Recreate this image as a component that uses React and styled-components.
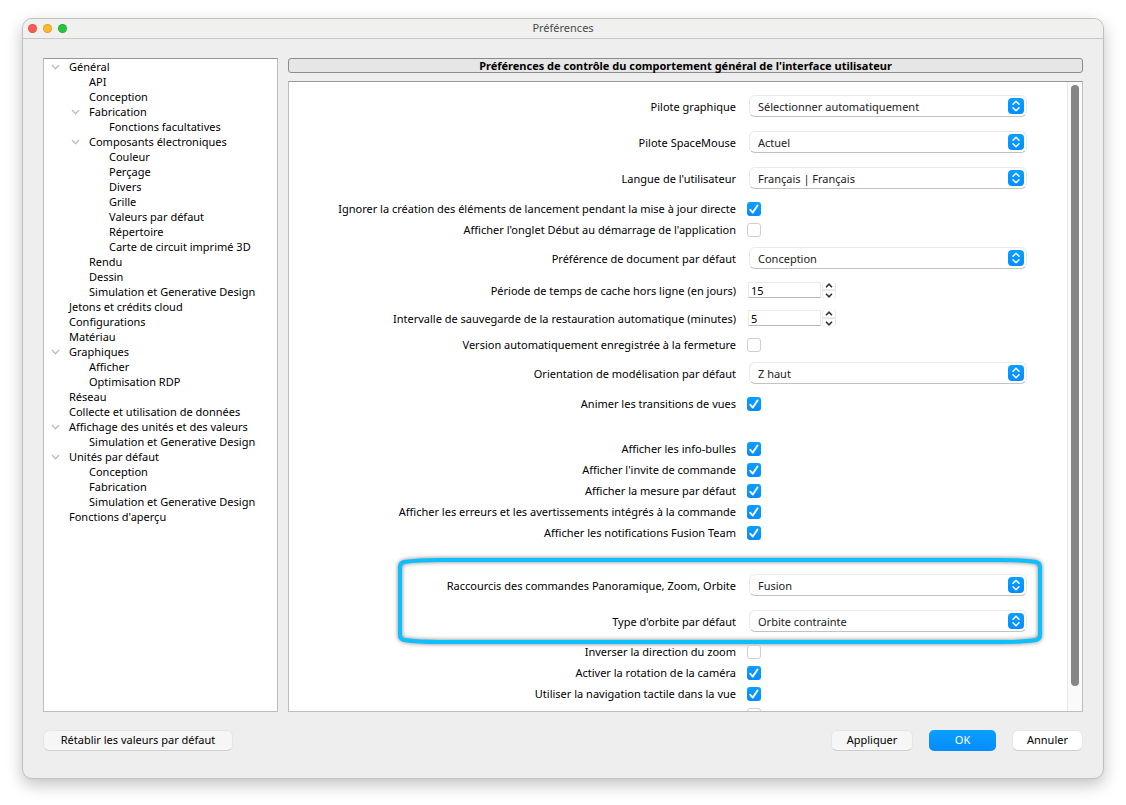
import React, { useId, useState } from 'react'
import styled, { createGlobalStyle, css } from 'styled-components'

const GlobalStyle = createGlobalStyle`
    * {
        box-sizing: border-box;
    }

    body {
        margin: 0;
        background: #fff;
    }

    body, button, input, select {
        font: 11px/15px "Noto Sans", "Open Sans", sans-serif;
        color: #000;
    }
`

const accent = 'linear-gradient(#0a9fff, #068cff)'

const Screen = styled.main`
    display: flex;
    height: 100vh;
    padding: 18px 22px 26px;
`

const Window = styled.section`
    flex: 1;
    display: flex;
    flex-direction: column;
    min-width: 0;
    border: 1px solid #c0c0c0;
    border-radius: 10px;
    background: #eee;
    box-shadow: 0 6px 16px rgba(0, 0, 0, 0.24);
    overflow: hidden;
`

const TitleBar = styled.header`
    display: grid;
    grid-template-columns: 1fr auto 1fr;
    align-items: center;
    height: 20px;
    padding: 0 5px;
    border-bottom: 1px solid #c8c8c8;
    background: #f0f0ee;
`

const Title = styled.h1`
    margin: 0;
    padding-bottom: 2px;
    font-size: 11px;
    font-weight: 400;
    color: #4a4a4a;
`

const Lights = styled.div`
    display: flex;
    gap: 6px;
`

const Light = styled.button`
    width: 9px;
    height: 9px;
    padding: 0;
    border: 1px solid rgba(0, 0, 0, 0.12);
    border-radius: 50%;
    background: ${props => props.$color};
`

const Body = styled.div`
    flex: 1;
    display: grid;
    grid-template-columns: 235px 1fr;
    column-gap: 10px;
    min-height: 0;
    padding: 19px 20px 0;
`

const Tree = styled.nav`
    border: 1px solid #bdbdbd;
    border-top-color: #979797;
    background: #fff;
    overflow: hidden;
`

const Branch = styled.ul`
    margin: 0;
    padding: 0 0 0 ${props => (props.$root ? 5 : 20)}px;
    list-style: none;
`

const Node = styled.div`
    display: flex;
    align-items: center;
    height: 15px;
    white-space: nowrap;
`

const Toggle = styled.button`
    display: flex;
    align-items: center;
    justify-content: center;
    width: 13px;
    height: 15px;
    margin-right: 7px;
    padding: 0;
    border: 0;
    background: none;
    visibility: ${props => (props.$empty ? 'hidden' : 'visible')};
`

const NodeLink = styled.a`
    color: #000;
    text-decoration: none;
`

const Content = styled.div`
    display: flex;
    flex-direction: column;
    gap: 8px;
    min-width: 0;
    min-height: 0;
`

const Heading = styled.h2`
    margin: 0;
    border: 1px solid #8c8c8c;
    border-radius: 3px;
    background: #e6e6e6;
    font-size: 11px;
    line-height: 13px;
    font-weight: 700;
    text-align: center;
`

const Panel = styled.div`
    flex: 1;
    display: flex;
    min-height: 0;
    border: 1px solid #bdbdbd;
    border-top-color: #979797;
    background: #fff;
    overflow: hidden;
`

const Form = styled.form`
    flex: 1;
    min-width: 0;
    padding: 6px 0;
    overflow-y: auto;
    scrollbar-width: none;
`

const Track = styled.div`
    width: 15px;
    padding: 3px;
    border-left: 1px solid #e8e8e8;
    background: #fafafa;
`

const Thumb = styled.div`
    width: 8px;
    height: 96.4%;
    border-radius: 4px;
    background: #868686;
`

const rowHeights = { select: 36, check: 21, spin: 28 }

const Row = styled.div`
    display: grid;
    grid-template-columns: 447px 1fr;
    column-gap: 11px;
    align-items: center;
    height: ${props => rowHeights[props.$kind]}px;
    margin-top: ${props => props.$gap || 0}px;
    padding-right: 40px;
`

const Label = styled.label`
    text-align: right;
    white-space: nowrap;
`

const Highlight = styled.div`
    position: relative;
    margin-top: 24px;
`

const Outline = styled.svg`
    position: absolute;
    top: -9px;
    left: 109px;
    width: calc(100% - 134px);
    height: 86px;
    overflow: visible;
    filter: drop-shadow(0 0 2px rgba(0, 0, 0, 0.5));
    pointer-events: none;
`

const SelectBox = styled.div`
    position: relative;
    height: 22px;
    margin-left: 2px;
`

const Select = styled.select`
    appearance: none;
    display: block;
    width: 100%;
    height: 22px;
    padding: 1px 30px 0 8px;
    border: 1px solid #e9e9e9;
    border-bottom-color: #c2c2c2;
    border-radius: 6px;
    background: #fff;
    color: #222;
`

const Arrows = styled.svg`
    position: absolute;
    top: 3px;
    right: 3px;
    border-radius: 4px;
    background: ${accent};
    pointer-events: none;
`

const Check = styled.input`
    appearance: none;
    display: block;
    width: 14px;
    height: 14px;
    margin: 0;
    border: 1px solid #cfcfcf;
    border-radius: 3px;
    background: #fff;

    &:checked {
        border: 0;
        background: ${accent};
    }
`

const CheckBox = styled.div`
    position: relative;
    width: 14px;
    height: 14px;
`

const Tick = styled.svg`
    position: absolute;
    top: 0;
    left: 0;
    pointer-events: none;
`

const Spin = styled.div`
    display: flex;
    align-items: center;
    gap: 1px;
    margin-left: 1px;
`

const SpinInput = styled.input`
    width: 73px;
    height: 16px;
    padding: 0 2px;
    border: 1px solid #e9e9e9;
    border-bottom-color: #b8b8b8;
    border-radius: 0;
`

const Stepper = styled.div`
    display: grid;
    gap: 2px;
    width: 14px;
    border: solid #e9e9e9;
    border-width: 0 1px;
    border-radius: 4px;
    background: #e9e9e9;
    overflow: hidden;
`

const Step = styled.button`
    display: flex;
    align-items: center;
    justify-content: center;
    height: 8px;
    padding: 0;
    border: 0;
    background: #fff;
`

const Footer = styled.footer`
    display: flex;
    align-items: center;
    gap: 16px;
    padding: 18px 20px 27px;
`

const Button = styled.button`
    min-width: ${props => props.$width}px;
    height: 21px;
    padding: 0 13px 2px;
    border: 1px solid #e6e6e6;
    border-bottom-color: #cfcfcf;
    border-radius: 6px;
    background: ${props => (props.$solid ? '#fff' : '#f6f6f6')};

    ${props => props.$primary && css`
        border: 0;
        border-radius: 5px;
        background: ${accent};
        color: #fff;
    `}
`

const Spacer = styled.div`
    flex: 1;
`

const tree = [
    ['Général', [
        ['API'],
        ['Conception'],
        ['Fabrication', [['Fonctions facultatives']]],
        ['Composants électroniques', [
            ['Couleur'],
            ['Perçage'],
            ['Divers'],
            ['Grille'],
            ['Valeurs par défaut'],
            ['Répertoire'],
            ['Carte de circuit imprimé 3D'],
        ]],
        ['Rendu'],
        ['Dessin'],
        ['Simulation et Generative Design'],
    ]],
    ['Jetons et crédits cloud'],
    ['Configurations'],
    ['Matériau'],
    ['Graphiques', [['Afficher'], ['Optimisation RDP']]],
    ['Réseau'],
    ['Collecte et utilisation de données'],
    ['Affichage des unités et des valeurs', [['Simulation et Generative Design']]],
    ['Unités par défaut', [
        ['Conception'],
        ['Fabrication'],
        ['Simulation et Generative Design'],
    ]],
    ["Fonctions d'aperçu"],
]

function TreeItem({ item }){
    const [label, children] = item
    const [open, setOpen] = useState(true)
    return (
        <li>
            <Node>
                <Toggle $empty={!children} aria-label={label} onClick={() => setOpen(!open)}>
                    <svg width="9" height="6" viewBox="0 0 9 6" fill="none" stroke="#bdbdbd" strokeWidth="1.3">
                        <path d="M1 1l3.5 3.8L8 1" />
                    </svg>
                </Toggle>
                <NodeLink href="#">{label}</NodeLink>
            </Node>
            {children && open && (
                <Branch>
                    {children.map(child => <TreeItem key={child[0]} item={child} />)}
                </Branch>
            )}
        </li>
    )
}

function SelectRow({ label, value, gap }){
    const id = useId()
    return (
        <Row $kind="select" $gap={gap}>
            <Label htmlFor={id}>{label}</Label>
            <SelectBox>
                <Select id={id}>
                    <option>{value}</option>
                </Select>
                <Arrows width="16" height="16" viewBox="0 0 16 16" fill="none" stroke="#fff" strokeWidth="1.5" strokeLinecap="round" strokeLinejoin="round">
                    <path d="M5 6.2l3-3 3 3M5 9.8l3 3 3-3" />
                </Arrows>
            </SelectBox>
        </Row>
    )
}

function CheckRow({ label, on, gap }){
    const id = useId()
    const [checked, setChecked] = useState(!!on)
    return (
        <Row $kind="check" $gap={gap}>
            <Label htmlFor={id}>{label}</Label>
            <CheckBox>
                <Check id={id} type="checkbox" checked={checked} onChange={() => setChecked(!checked)} />
                {checked && (
                    <Tick width="14" height="14" viewBox="0 0 14 14" fill="none" stroke="#fff" strokeWidth="1.9" strokeLinecap="round" strokeLinejoin="round">
                        <path d="M3.3 7.8l2.5 2.8 4.7-7.2" />
                    </Tick>
                )}
            </CheckBox>
        </Row>
    )
}

function SpinRow({ label, initial }){
    const id = useId()
    const [value, setValue] = useState(initial)
    return (
        <Row $kind="spin">
            <Label htmlFor={id}>{label}</Label>
            <Spin>
                <SpinInput id={id} value={value} onChange={e => setValue(Number(e.target.value) || 0)} />
                <Stepper>
                    <Step type="button" aria-label="+" onClick={() => setValue(value + 1)}>
                        <svg width="8" height="5" viewBox="0 0 8 5" fill="none" stroke="#333" strokeWidth="1.6">
                            <path d="M1 4.2l3-3 3 3" />
                        </svg>
                    </Step>
                    <Step type="button" aria-label="-" onClick={() => setValue(value - 1)}>
                        <svg width="8" height="5" viewBox="0 0 8 5" fill="none" stroke="#333" strokeWidth="1.6">
                            <path d="M1 .8l3 3 3-3" />
                        </svg>
                    </Step>
                </Stepper>
            </Spin>
        </Row>
    )
}

function Settings(){
    return (
        <Form>
            <SelectRow label="Pilote graphique" value="Sélectionner automatiquement" />
            <SelectRow label="Pilote SpaceMouse" value="Actuel" />
            <SelectRow label="Langue de l'utilisateur" value="Français | Français" />
            <CheckRow gap={2} on label="Ignorer la création des éléments de lancement pendant la mise à jour directe" />
            <CheckRow label="Afficher l'onglet Début au démarrage de l'application" />
            <SelectRow label="Préférence de document par défaut" value="Conception" />
            <SpinRow label="Période de temps de cache hors ligne (en jours)" initial={15} />
            <SpinRow label="Intervalle de sauvegarde de la restauration automatique (minutes)" initial={5} />
            <CheckRow gap={2} label="Version automatiquement enregistrée à la fermeture" />
            <SelectRow label="Orientation de modélisation par défaut" value="Z haut" />
            <CheckRow gap={2} on label="Animer les transitions de vues" />
            <CheckRow gap={24} on label="Afficher les info-bulles" />
            <CheckRow on label="Afficher l'invite de commande" />
            <CheckRow on label="Afficher la mesure par défaut" />
            <CheckRow on label="Afficher les erreurs et les avertissements intégrés à la commande" />
            <CheckRow on label="Afficher les notifications Fusion Team" />
            <Highlight>
                <SelectRow label="Raccourcis des commandes Panoramique, Zoom, Orbite" value="Fusion" />
                <SelectRow label="Type d'orbite par défaut" value="Orbite contrainte" />
                <Outline viewBox="0 0 644 86" preserveAspectRatio="none" fill="none" stroke="#0dbfff" strokeWidth="4">
                    <path d="M2 9Q2 5 6 4Q20 2 42 2H602Q624 2 638 4Q642 5 642 9V77Q642 81 638 82Q624 84 602 84H42Q20 84 6 82Q2 81 2 77Z" />
                </Outline>
            </Highlight>
            <CheckRow gap={2} label="Inverser la direction du zoom" />
            <CheckRow on label="Activer la rotation de la caméra" />
            <CheckRow on label="Utiliser la navigation tactile dans la vue" />
            <CheckRow label="Activer les info-bulles en mouvement dans la vue" />
        </Form>
    )
}

function App(){
    return (
        <React.Fragment>
            <GlobalStyle />
            <Screen>
                <Window>
                    <TitleBar>
                        <Lights>
                            <Light $color="#ff5a52" aria-label="Fermer" />
                            <Light $color="#fdb92e" aria-label="Réduire" />
                            <Light $color="#27c53f" aria-label="Agrandir" />
                        </Lights>
                        <Title>Préférences</Title>
                    </TitleBar>
                    <Body>
                        <Tree>
                            <Branch $root>
                                {tree.map(item => <TreeItem key={item[0]} item={item} />)}
                            </Branch>
                        </Tree>
                        <Content>
                            <Heading>Préférences de contrôle du comportement général de l'interface utilisateur</Heading>
                            <Panel>
                                <Settings />
                                <Track>
                                    <Thumb />
                                </Track>
                            </Panel>
                        </Content>
                    </Body>
                    <Footer>
                        <Button $width={190}>Rétablir les valeurs par défaut</Button>
                        <Spacer />
                        <Button $width={82}>Appliquer</Button>
                        <Button $width={67} $primary>OK</Button>
                        <Button $width={71} $solid>Annuler</Button>
                    </Footer>
                </Window>
            </Screen>
        </React.Fragment>
    )
}

export default App
